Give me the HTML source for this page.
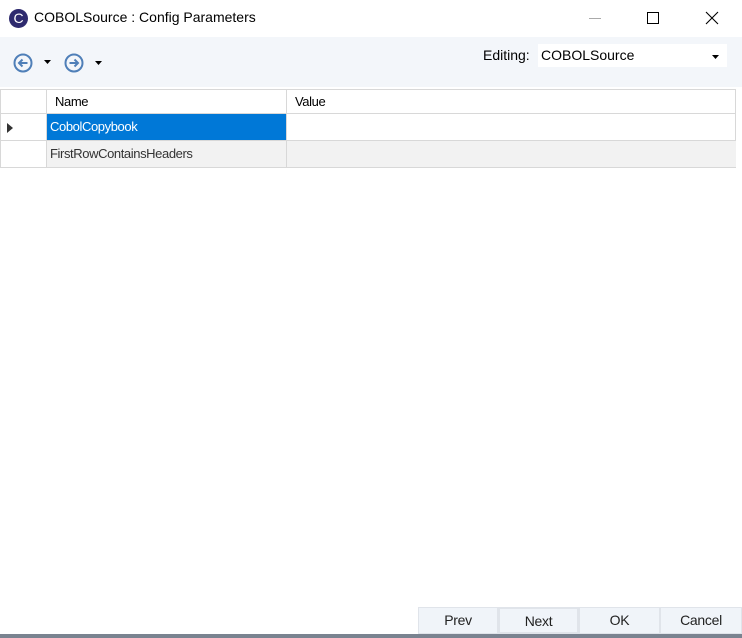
<!DOCTYPE html>
<html><head><style>
*{margin:0;padding:0;box-sizing:border-box}
body{width:742px;height:638px;background:#fff;font-family:"Liberation Sans",sans-serif;position:relative;overflow:hidden}
.abs{position:absolute}
.t{font-size:14px;color:#000}
.cell{position:absolute;font-size:13px;letter-spacing:-0.4px;line-height:26px;padding-left:3px}
.btn{position:absolute;top:607px;height:27px;background:#f0f4f9;border:1px solid #e0e4ea;font-size:14px;text-align:center;line-height:25px;color:#222;letter-spacing:-0.3px}
</style></head><body>
<div class="abs" style="left:9px;top:9px;width:19px;height:19px;border-radius:50%;background:#2e2a6e"></div>
<div class="abs" style="left:9px;top:9px;width:19px;height:19px;color:#fff;font-size:14px;text-align:center;line-height:19px">C</div>
<div class="abs t" style="left:34px;top:9px">COBOLSource : Config Parameters</div>
<div class="abs" style="left:589px;top:18px;width:12px;height:1px;background:#aaa"></div>
<div class="abs" style="left:647px;top:12px;width:12px;height:12px;border:1px solid #000"></div>
<svg class="abs" style="left:705px;top:11px" width="14" height="14"><path d="M1 1L13 13M13 1L1 13" stroke="#000" stroke-width="1.1"/></svg>
<div class="abs" style="left:0;top:37px;width:742px;height:50px;background:#f3f6fa"></div>
<svg class="abs" style="left:12px;top:52px" width="24" height="22"><circle cx="11" cy="11" r="8.5" fill="none" stroke="#4f7fb8" stroke-width="2"/><path d="M15.5 11H7M10.5 7.5L7 11L10.5 14.5" fill="none" stroke="#4f7fb8" stroke-width="2"/></svg>
<svg class="abs" style="left:44px;top:60px" width="7" height="4"><path d="M0 0H7L3.5 4Z" fill="#000"/></svg>
<svg class="abs" style="left:63px;top:52px" width="24" height="22"><circle cx="11" cy="11" r="8.5" fill="none" stroke="#4f7fb8" stroke-width="2"/><path d="M6.5 11H15M11.5 7.5L15 11L11.5 14.5" fill="none" stroke="#4f7fb8" stroke-width="2"/></svg>
<svg class="abs" style="left:95px;top:61px" width="7" height="4"><path d="M0 0H7L3.5 4Z" fill="#000"/></svg>
<div class="abs t" style="left:483px;top:47px">Editing:</div>
<div class="abs" style="left:538px;top:44px;width:189px;height:23px;background:#fff"></div>
<div class="abs t" style="left:541px;top:47px">COBOLSource</div>
<svg class="abs" style="left:712px;top:55px" width="7" height="4"><path d="M0 0H7L3.5 4Z" fill="#000"/></svg>
<div class="abs" style="left:0;top:89px;width:736px;height:79px;border:1px solid #d8d8d8;background:#fff"></div>
<div class="abs" style="left:0;top:113px;width:736px;height:1px;background:#d8d8d8"></div>
<div class="abs" style="left:0;top:140px;width:736px;height:1px;background:#d8d8d8"></div>
<div class="abs" style="left:46px;top:89px;width:1px;height:79px;background:#d8d8d8"></div>
<div class="abs" style="left:286px;top:89px;width:1px;height:79px;background:#d8d8d8"></div>
<div class="cell" style="left:52px;top:89px;line-height:25px;color:#000">Name</div>
<div class="cell" style="left:292px;top:89px;line-height:25px;color:#000">Value</div>
<svg class="abs" style="left:7px;top:123px" width="6" height="10"><path d="M0 0L6 5L0 10Z" fill="#333"/></svg>
<div class="cell" style="left:47px;top:114px;width:239px;height:26px;background:#0078d7;color:#fff">CobolCopybook</div>
<div class="abs" style="left:47px;top:141px;width:689px;height:26px;background:#f2f2f2"></div>
<div class="abs" style="left:286px;top:141px;width:1px;height:26px;background:#d8d8d8"></div>
<div class="cell" style="left:47px;top:141px;color:#333">FirstRowContainsHeaders</div>
<div class="btn" style="left:418px;width:80px">Prev</div>
<div class="btn" style="left:498px;width:81px;border:2px solid #e0e4ea;line-height:24px">Next</div>
<div class="btn" style="left:579px;width:81px">OK</div>
<div class="btn" style="left:660px;width:82px">Cancel</div>
<div class="abs" style="left:0;top:634px;width:742px;height:4px;background:#7a8390"></div>
</body></html>
